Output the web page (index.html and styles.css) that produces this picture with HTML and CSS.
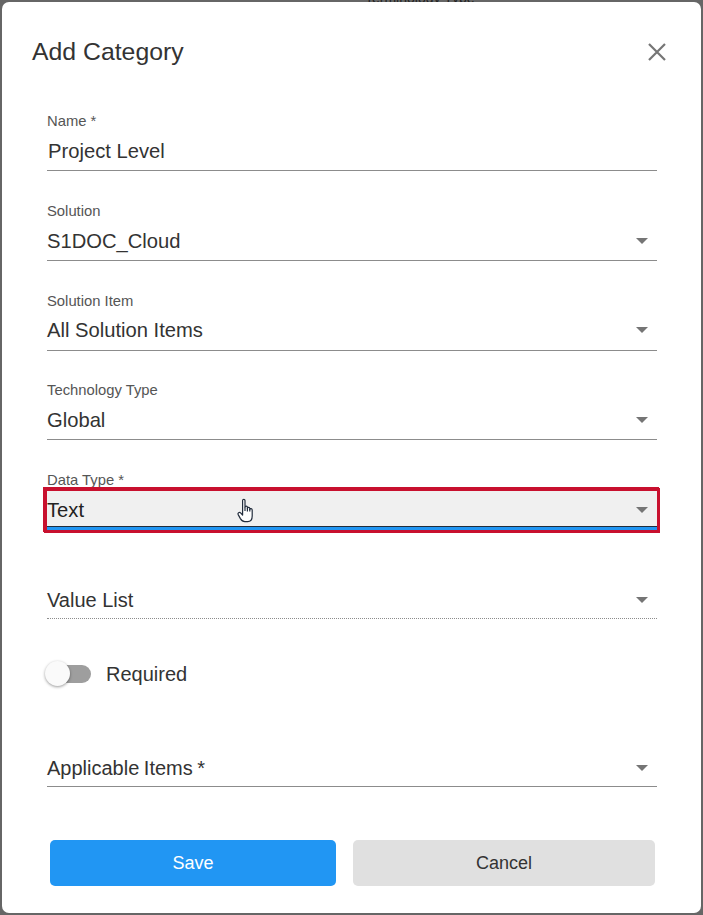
FILE: index.html
```html
<!DOCTYPE html>
<html lang="en">
<head>
<meta charset="utf-8">
<title>Add Category</title>
<link rel="stylesheet" href="styles.css">
</head>
<body>
<div class="backdrop-text">Terminology Type</div>
<main class="dialog">
  <header class="dialog-head">
    <h1 class="title">Add Category</h1>
    <svg class="close" viewBox="0 0 18 18" width="18" height="18" aria-label="Close"><path d="M1 1L17 17M17 1L1 17"/></svg>
  </header>
  <form class="form">
    <div class="field">
      <label class="label">Name *</label>
      <div class="control"><span class="value value-input">Project Level</span></div>
    </div>
    <div class="field">
      <label class="label">Solution</label>
      <div class="control"><span class="value">S1DOC_Cloud</span><svg class="arrow" viewBox="0 0 12 6" width="12" height="6"><path d="M0 0H12L6 6Z"/></svg></div>
    </div>
    <div class="field">
      <label class="label">Solution Item</label>
      <div class="control"><span class="value">All Solution Items</span><svg class="arrow" viewBox="0 0 12 6" width="12" height="6"><path d="M0 0H12L6 6Z"/></svg></div>
    </div>
    <div class="field">
      <label class="label">Technology Type</label>
      <div class="control"><span class="value">Global</span><svg class="arrow" viewBox="0 0 12 6" width="12" height="6"><path d="M0 0H12L6 6Z"/></svg></div>
    </div>
    <div class="field">
      <label class="label label-active">Data Type *</label>
      <div class="control control-active">
        <span class="value">Text</span>
        <svg class="hand" viewBox="0 0 18 25" width="18" height="25"><path d="M5.6 13.5V2.6C5.6 .9 8 .9 8 2.6V9.2C8 7.8 10.4 7.8 10.4 9.3V10.2C10.6 9 12.8 9 12.8 10.6V11.4C13.2 10.2 15.2 10.4 15.2 12V18C15.2 21 13.6 23.6 10.6 23.6H7.8C5.6 23.6 4.6 22.6 3.4 20.6L1.2 16.6C.4 15 2.4 13.6 3.6 14.8L5.6 17Z"/><path class="hand-line" d="M8 9.2V13M10.4 10V13.4M12.8 11V13.6"/></svg>
        <svg class="arrow" viewBox="0 0 12 6" width="12" height="6"><path d="M0 0H12L6 6Z"/></svg>
      </div>
    </div>
    <div class="field">
      <div class="control control-dotted"><span class="value value-plain">Value List</span><svg class="arrow" viewBox="0 0 12 6" width="12" height="6"><path d="M0 0H12L6 6Z"/></svg></div>
    </div>
    <div class="toggle-row">
      <span class="switch"><span class="thumb"></span></span>
      <span class="value value-plain">Required</span>
    </div>
    <div class="field field-applicable">
      <div class="control"><span class="value value-plain value-tight">Applicable Items *</span><svg class="arrow" viewBox="0 0 12 6" width="12" height="6"><path d="M0 0H12L6 6Z"/></svg></div>
    </div>
    <div class="actions">
      <button type="button" class="btn btn-save">Save</button>
      <button type="button" class="btn btn-cancel">Cancel</button>
    </div>
  </form>
</main>
</body>
</html>
```
FILE: styles.css
```css
* { box-sizing: border-box; }
html, body { margin: 0; height: 915px; overflow: hidden; }
body {
  background: #666;
  padding: 2px;
  font-family: "Liberation Sans", Arial, sans-serif;
  position: relative;
}
.backdrop-text {
  position: absolute;
  top: -10px;
  left: 365px;
  font-size: 14px;
  line-height: 16px;
  color: #222;
}
.dialog {
  position: relative;
  width: 699px;
  height: 911px;
  background: #fff;
  border-radius: 7px;
  padding: 0 44px 0 45px;
}
.dialog-head {
  height: 79.8px;
  margin: 0 0 0 -15px;
  display: flex;
  align-items: center;
  justify-content: space-between;
  padding: 20px 0 0 0;
}
.title {
  margin: 0;
  font-size: 24.8px;
  font-weight: 400;
  line-height: 28px;
  color: #333;
}
.close { fill: none; stroke: #757575; stroke-width: 2.2; margin-right: -9px; }
.form { display: flex; flex-direction: column; }
.field {
  height: 89.6px;
  display: flex;
  flex-direction: column;
  justify-content: flex-end;
}
.label {
  font-size: 14.8px;
  line-height: 16px;
  color: #555;
  margin-bottom: 5px;
}
.label-active { margin-bottom: 3px; }
.control {
  height: 37px;
  display: flex;
  align-items: center;
  justify-content: space-between;
  gap: 8px;
  border-bottom: 1px solid #8c8c8c;
  position: relative;
  padding: 0 9px 2.4px 0;
}
.value { font-size: 20.2px; line-height: 24px; color: #333; }
.value-plain { font-size: 20px; }
.value-tight { word-spacing: -1px; }
.value-input { padding-left: 1px; }
.arrow { fill: #757575; flex: none; }
.control-active {
  height: 39px;
  padding-top: 2px;
  padding-bottom: 0;
  background: #f0f0f0;
  border-bottom: 3px solid #2196f3;
  box-shadow: inset 0 -1px 0 #1f2d3d, 0 0 0 3px #c8102e, -1px -1px 0 3px #c8102e;
}
.control-active .value { color: #222; }
.hand {
  position: absolute;
  left: 190px;
  top: 7px;
  fill: #fff;
  stroke: #222c3c;
  stroke-width: 1.2;
  stroke-linejoin: round;
}
.hand-line { fill: none; }
.control-dotted { border-bottom: 1px dotted #8c8c8c; padding-bottom: 1px; }
.toggle-row {
  height: 56px;
  display: flex;
  align-items: center;
  gap: 15px;
  margin-top: 27px;
}
.switch {
  display: block;
  position: relative;
  width: 44px;
  height: 18px;
  background: #9e9e9e;
  border-radius: 9px;
}
.thumb {
  position: absolute;
  left: -2px;
  top: -4px;
  width: 25px;
  height: 25px;
  border-radius: 50%;
  background: #fafafa;
  box-shadow: 0 1px 3px rgba(0, 0, 0, .4);
}
.field-applicable { height: 85px; }
.field-applicable .control { padding-bottom: 0; }
.actions {
  display: flex;
  justify-content: space-between;
  margin-top: 53px;
  padding: 0 2px 0 3px;
}
.btn {
  height: 46px;
  border: 0;
  border-radius: 5px;
  font-family: inherit;
  font-size: 18px;
  padding: 0;
}
.btn-save { width: 286px; background: #2196f3; color: #fff; }
.btn-cancel { width: 302px; background: #e0e0e0; color: #333; }
```
